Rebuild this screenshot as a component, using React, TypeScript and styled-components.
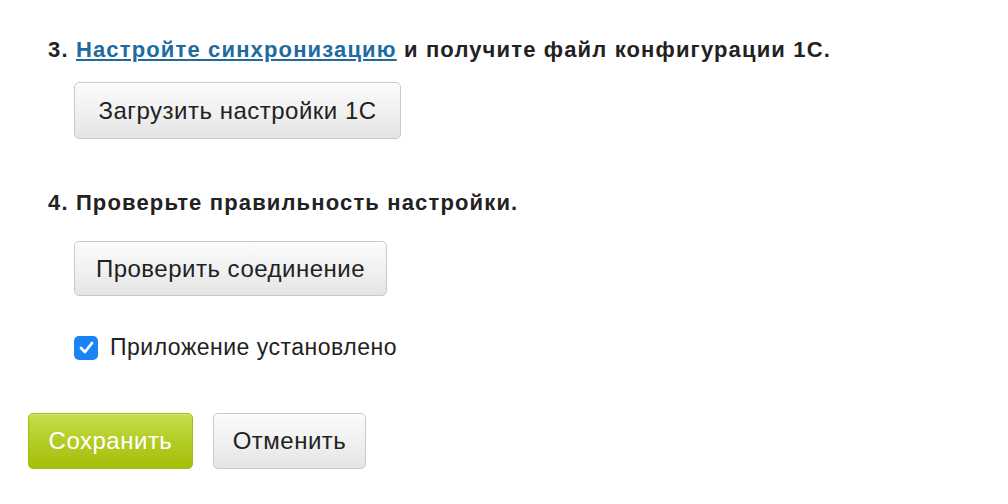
import React from "react";
import styled, { createGlobalStyle } from "styled-components";

const GlobalStyle = createGlobalStyle`
  html, body {
    margin: 0;
    padding: 0;
    background: #ffffff;
  }
  body {
    font-family: "Liberation Sans", Arial, Helvetica, sans-serif;
    color: #222222;
  }
`;

const Page = styled.div`
  width: 1008px;
  height: 504px;
  box-sizing: border-box;
  padding: 37px 0 0 28px;
  overflow: hidden;
`;

const Step = styled.section<{ $gap: number; $after: number }>`
  margin-left: 20px;
  margin-bottom: ${(p) => p.$after}px;
  h3 {
    margin: 0 0 ${(p) => p.$gap}px;
    font-size: 22px;
    line-height: 25px;
    letter-spacing: 1.15px;
    font-weight: 700;
    color: #222222;
  }
`;

const Link = styled.a`
  color: #1f6aa0;
  text-decoration: underline;
  text-underline-offset: 2px;
`;

const StepBody = styled.div`
  padding-left: 26px;
`;

const Button = styled.button<{ $primary?: boolean; $h?: number; $w: number }>`
  box-sizing: border-box;
  width: ${(p) => p.$w}px;
  height: ${(p) => p.$h ?? 56}px;
  padding: 0;
  border-radius: 5px;
  font-family: "Liberation Sans", Arial, Helvetica, sans-serif;
  font-size: 24px;
  letter-spacing: 0.5px;
  cursor: pointer;
  border: 1px solid ${(p) => (p.$primary ? "#a2bb0e" : "#c9c9c9")};
  color: ${(p) => (p.$primary ? "#ffffff" : "#222222")};
  background: ${(p) =>
    p.$primary
      ? "linear-gradient(to bottom, #c8de4d 0%, #b3cc25 50%, #a6bf0a 100%)"
      : "linear-gradient(to bottom, #fbfbfb 0%, #f0f0f0 55%, #e4e4e4 100%)"};
  box-shadow: ${(p) =>
    p.$primary ? "inset 0 1px 0 rgba(255,255,255,0.25)" : "inset 0 1px 0 #ffffff"};
`;

const CheckRow = styled.label`
  display: flex;
  align-items: center;
  gap: 12px;
  margin-left: 46px;
  margin-bottom: 52px;
  font-size: 23px;
  letter-spacing: 0.5px;
  color: #222222;
  cursor: pointer;
`;

const Box = styled.span`
  width: 24px;
  height: 24px;
  border-radius: 5px;
  background: #1a84f6;
  display: flex;
  align-items: center;
  justify-content: center;
`;

const Actions = styled.div`
  display: flex;
  gap: 20px;
`;

export default function App() {
  return (
    <>
      <GlobalStyle />
      <Page>
        <Step $gap={20} $after={51}>
          <h3>
            3. <Link href="#">Настройте синхронизацию</Link> и получите файл
            конфигурации 1С.
          </h3>
          <StepBody>
            <Button $w={327} $h={57}>
              Загрузить настройки 1С
            </Button>
          </StepBody>
        </Step>
        <Step $gap={26} $after={38}>
          <h3>4. Проверьте правильность настройки.</h3>
          <StepBody>
            <Button $w={313} $h={55}>
              Проверить соединение
            </Button>
          </StepBody>
        </Step>
        <CheckRow>
          <Box>
            <svg width="15" height="13" viewBox="0 0 15 13">
              <path
                d="M2 7 L6 11 L13 2"
                fill="none"
                stroke="#ffffff"
                strokeWidth="2.8"
                strokeLinecap="round"
                strokeLinejoin="round"
              />
            </svg>
          </Box>
          Приложение установлено
        </CheckRow>
        <Actions>
          <Button $primary $w={165}>
            Сохранить
          </Button>
          <Button $w={153}>Отменить</Button>
        </Actions>
      </Page>
    </>
  );
}
